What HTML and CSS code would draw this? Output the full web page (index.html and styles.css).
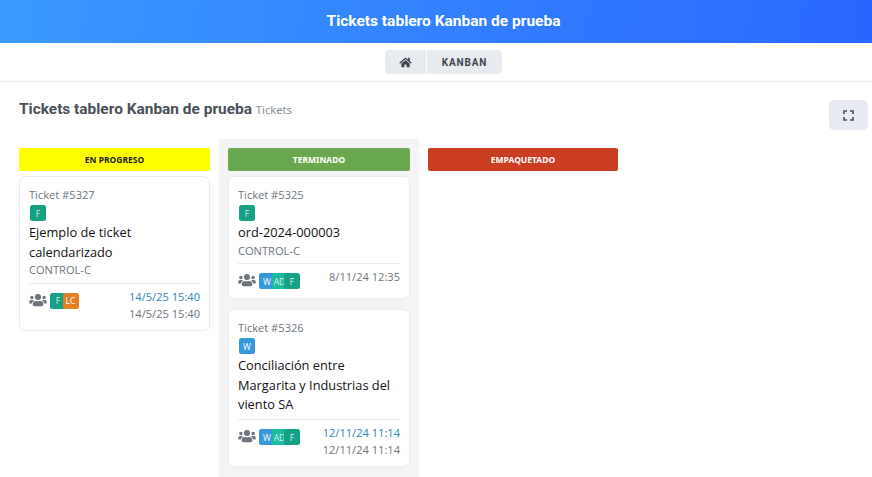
FILE: index.html
```html
<!DOCTYPE html>
<html lang="es">
<head>
<meta charset="utf-8">
<title>Tickets tablero Kanban de prueba</title>
<link rel="stylesheet" href="styles.css">
</head>
<body>
<header class="topbar">Tickets tablero Kanban de prueba</header>
<nav class="crumbs">
  <a class="crumb crumb-home"><svg width="13" height="11" viewBox="0 0 576 512"><path fill="currentColor" d="M280.4 148.3 96 300.1V464a16 16 0 0 0 16 16l112-.3a16 16 0 0 0 15.9-16V368a16 16 0 0 1 16-16h64a16 16 0 0 1 16 16v95.6a16 16 0 0 0 16 16.1l112 .3a16 16 0 0 0 16-16V300L295.7 148.3a12.200 12.200 0 0 0-15.300 0zM571.600 251.500 488 182.600V44a12 12 0 0 0-12-12h-56a12 12 0 0 0-12 12v72.600L318.500 43a48 48 0 0 0-61 0L4.300 251.500a12 12 0 0 0-1.600 16.900l25.500 31A12 12 0 0 0 45.200 301l235.200-193.700a12.200 12.200 0 0 1 15.300 0L530.900 301a12 12 0 0 0 16.900-1.600l25.500-31a12 12 0 0 0-1.700-16.900z"/></svg></a>
  <a class="crumb crumb-text">KANBAN</a>
</nav>
<main class="page">
  <div class="title-row">
    <h1 class="title">Tickets tablero Kanban de prueba <small class="subtitle">Tickets</small></h1>
    <button class="fs-btn" aria-label="Pantalla completa"><svg width="11" height="11" viewBox="0 0 11 11"><path fill="none" stroke="currentColor" stroke-width="1.600" d="M1 4V1h3M7 1h3v3M10 7v3H7M4 10H1V7"/></svg></button>
  </div>
  <div class="board">
    <section class="col col-first">
      <div class="col-head head-yellow">EN PROGRESO</div>
      <article class="card">
        <div class="ticket-no">Ticket #5327</div>
        <div class="tags"><span class="tag green">F</span></div>
        <div class="name">Ejemplo de ticket calendarizado</div>
        <div class="client">CONTROL-C</div>
        <div class="foot">
          <div class="people">
            <svg class="users" width="18" height="14" viewBox="0 0 640 512"><path fill="currentColor" d="M96 224a64 64 0 1 0 0-128 64 64 0 0 0 0 128zm448 0a64 64 0 1 0 0-128 64 64 0 0 0 0 128zm32 32h-64a63.800 63.800 0 0 0-45.100 18.600A146.300 146.300 0 0 1 542 384h66a32 32 0 0 0 32-32v-32a64 64 0 0 0-64-64zm-256 0a112 112 0 1 0 0-224 112 112 0 0 0 0 224zm76.800 32h-8.300a154.600 154.600 0 0 1-137 0h-8.300A115.200 115.200 0 0 0 128 403.200V432a48 48 0 0 0 48 48h288a48 48 0 0 0 48-48v-28.800A115.200 115.200 0 0 0 396.800 288zm-223.700-13.400A63.800 63.800 0 0 0 128 256H64a64 64 0 0 0-64 64v32a32 32 0 0 0 32 32h65.900a146.600 146.600 0 0 1 75.200-109.400z"/></svg>
            <span class="tag green overlap">F</span><span class="tag orange overlap">LC</span>
          </div>
          <div class="dates"><div class="date-blue">14/5/25 15:40</div><div>14/5/25 15:40</div></div>
        </div>
      </article>
    </section>
    <section class="col col-mid">
      <div class="col-head head-green">TERMINADO</div>
      <article class="card">
        <div class="ticket-no">Ticket #5325</div>
        <div class="tags"><span class="tag green">F</span></div>
        <div class="name">ord-2024-000003</div>
        <div class="client">CONTROL-C</div>
        <div class="foot">
          <div class="people">
            <svg class="users" width="18" height="14" viewBox="0 0 640 512"><path fill="currentColor" d="M96 224a64 64 0 1 0 0-128 64 64 0 0 0 0 128zm448 0a64 64 0 1 0 0-128 64 64 0 0 0 0 128zm32 32h-64a63.800 63.800 0 0 0-45.100 18.600A146.300 146.300 0 0 1 542 384h66a32 32 0 0 0 32-32v-32a64 64 0 0 0-64-64zm-256 0a112 112 0 1 0 0-224 112 112 0 0 0 0 224zm76.800 32h-8.300a154.600 154.600 0 0 1-137 0h-8.300A115.200 115.200 0 0 0 128 403.200V432a48 48 0 0 0 48 48h288a48 48 0 0 0 48-48v-28.800A115.200 115.200 0 0 0 396.800 288zm-223.700-13.400A63.800 63.800 0 0 0 128 256H64a64 64 0 0 0-64 64v32a32 32 0 0 0 32 32h65.900a146.600 146.600 0 0 1 75.200-109.400z"/></svg>
            <span class="tag blue overlap">W</span><span class="tag teal overlap">AD</span><span class="tag green overlap">F</span>
          </div>
          <div class="dates"><div>8/11/24 12:35</div></div>
        </div>
      </article>
      <article class="card">
        <div class="ticket-no">Ticket #5326</div>
        <div class="tags"><span class="tag blue">W</span></div>
        <div class="name">Conciliación entre Margarita y Industrias del viento SA</div>
        <div class="foot">
          <div class="people">
            <svg class="users" width="18" height="14" viewBox="0 0 640 512"><path fill="currentColor" d="M96 224a64 64 0 1 0 0-128 64 64 0 0 0 0 128zm448 0a64 64 0 1 0 0-128 64 64 0 0 0 0 128zm32 32h-64a63.800 63.800 0 0 0-45.100 18.600A146.300 146.300 0 0 1 542 384h66a32 32 0 0 0 32-32v-32a64 64 0 0 0-64-64zm-256 0a112 112 0 1 0 0-224 112 112 0 0 0 0 224zm76.800 32h-8.300a154.600 154.600 0 0 1-137 0h-8.300A115.200 115.200 0 0 0 128 403.200V432a48 48 0 0 0 48 48h288a48 48 0 0 0 48-48v-28.800A115.200 115.200 0 0 0 396.800 288zm-223.700-13.400A63.800 63.800 0 0 0 128 256H64a64 64 0 0 0-64 64v32a32 32 0 0 0 32 32h65.900a146.600 146.600 0 0 1 75.200-109.400z"/></svg>
            <span class="tag blue overlap">W</span><span class="tag teal overlap">AD</span><span class="tag green overlap">F</span>
          </div>
          <div class="dates"><div class="date-blue">12/11/24 11:14</div><div>12/11/24 11:14</div></div>
        </div>
      </article>
    </section>
    <section class="col col-last">
      <div class="col-head head-red">EMPAQUETADO</div>
    </section>
  </div>
</main>
</body>
</html>
```

FILE: styles.css
```css
* { box-sizing: border-box; }
html, body { margin: 0; height: 100%; overflow: hidden; }
body { width: 872px; height: 477px; background: #fff; font-family: "Open Sans", sans-serif; color: #495057; }

.topbar {
  height: 43px; line-height: 43px; text-align: center; padding-left: 15px;
  background: linear-gradient(100deg, #3a9bff 0%, #2a66ff 100%);
  color: #fff; font-family: Roboto, sans-serif; font-weight: 700; font-size: 15.500px;
}

.crumbs {
  height: 39px; padding: 7px 0 0 15px; display: flex; justify-content: center; gap: 1px;
  border-bottom: 1px solid #e9ecef;
}
.crumb {
  height: 24px; background: #e7eaee; color: #3f4650; display: flex; align-items: center; justify-content: center;
}
.crumb-home { width: 41px; border-radius: 4px 0 0 4px; }
.crumb-text { width: 75px; border-radius: 0 4px 4px 0; font-family: Roboto, sans-serif; font-weight: 700; font-size: 10px; letter-spacing: .9px; }

.page { padding: 17px 4px 0 19px; }
.title-row { display: flex; justify-content: space-between; align-items: flex-start; height: 40px; }
.title { margin: 0; font-family: Roboto, sans-serif; font-size: 15.450px; line-height: 20px; font-weight: 700; color: #495057; }
.subtitle { font-family: "Noto Sans", sans-serif; font-size: 11.200px; font-weight: 400; color: #868e96; }
.fs-btn {
  width: 39px; height: 30px; margin-top: 1px; border: 0; border-radius: 5px; background: #e7eaf0; color: #495057;
  display: flex; align-items: center; justify-content: center; padding: 0;
}

.board { display: flex; align-items: flex-start; margin-left: -19px; height: 338px; }
.col { padding-top: 9px; }
.col-first { width: 219px; padding-left: 19px; padding-right: 9px; }
.col-mid { width: 200px; padding-left: 9px; padding-right: 9px; background: #f4f4f5; height: 100%; }
.col-last { width: 209px; padding-left: 9px; padding-right: 10px; }

.col-head {
  height: 23px; line-height: 23px; text-align: center; border-radius: 2px;
  font-family: "Noto Sans", sans-serif; font-size: 8.500px; font-weight: 700; margin-bottom: 5px;
}
.head-yellow { background: #ffff00; color: #222; }
.head-green { background: #69a84f; color: #fff; }
.head-red { background: #cc3e22; color: #fff; }

.card {
  background: #fff; border: 1px solid #e9ebf0; border-radius: 6px; padding: 9px 9px 8px;
  margin-bottom: 10px; font-size: 11.100px; color: #6c757d;
}
.ticket-no { line-height: 17px; }
.tags { display: flex; padding-left: 1px; height: 18px; margin-top: 2px; }
.tag {
  display: inline-flex; align-items: center; justify-content: center; width: 16px; height: 16px; border-radius: 2.500px;
  color: #dfeee9; font-size: 8.500px; overflow: hidden; flex: none;
}
.green { background: #16a085; }
.teal { background: #1abc9c; }
.blue { background: #3498db; color: #fff; }
.orange { background: #e67e22; color: #fff; }
.name { color: #111; font-size: 12.800px; line-height: 19.500px; }
.client { line-height: 16px; }
.foot { border-top: 1px solid #e9ebf0; padding-top: 4px; display: flex; justify-content: space-between; margin-top: 4.500px; }
.people { display: flex; align-items: flex-start; margin-top: 5px; margin-bottom: 1px; }
.users { color: #6c757d; margin-right: 3px; }
.overlap { margin-right: -3.500px; }
.overlap:last-child { margin-right: 0; }
.dates { text-align: right; line-height: 17px; }
.date-blue { color: #2d86b5; }
```
